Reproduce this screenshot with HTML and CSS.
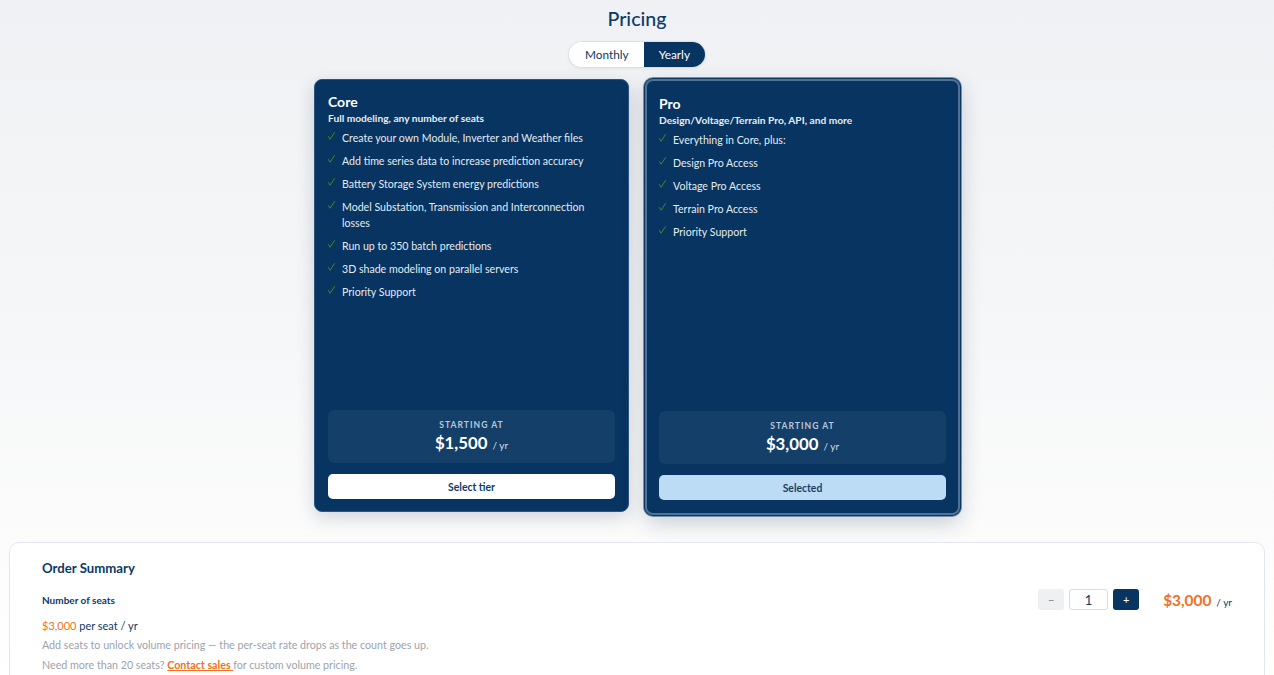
FILE: index.html
```html
<!DOCTYPE html>
<html lang="en">
<head>
<meta charset="utf-8">
<title>Pricing</title>
<link rel="stylesheet" href="styles.css">
</head>
<body>
<main class="page">
  <h1 class="title">Pricing</h1>
  <div class="toggle">
    <button class="toggle-btn">Monthly</button>
    <button class="toggle-btn active">Yearly</button>
  </div>

  <section class="plans">
    <article class="plan">
      <h2 class="plan-name">Core</h2>
      <p class="plan-sub">Full modeling, any number of seats</p>
      <ul class="features">
        <li><svg class="check" viewBox="0 0 8 9"><path d="M0.6 5.2 L2.4 8.2 L7.4 0.6"/></svg><span>Create your own Module, Inverter and Weather files</span></li>
        <li><svg class="check" viewBox="0 0 8 9"><path d="M0.6 5.2 L2.4 8.2 L7.4 0.6"/></svg><span>Add time series data to increase prediction accuracy</span></li>
        <li><svg class="check" viewBox="0 0 8 9"><path d="M0.6 5.2 L2.4 8.2 L7.4 0.6"/></svg><span>Battery Storage System energy predictions</span></li>
        <li><svg class="check" viewBox="0 0 8 9"><path d="M0.6 5.2 L2.4 8.2 L7.4 0.6"/></svg><span>Model Substation, Transmission and Interconnection losses</span></li>
        <li><svg class="check" viewBox="0 0 8 9"><path d="M0.6 5.2 L2.4 8.2 L7.4 0.6"/></svg><span>Run up to 350 batch predictions</span></li>
        <li><svg class="check" viewBox="0 0 8 9"><path d="M0.6 5.2 L2.4 8.2 L7.4 0.6"/></svg><span>3D shade modeling on parallel servers</span></li>
        <li><svg class="check" viewBox="0 0 8 9"><path d="M0.6 5.2 L2.4 8.2 L7.4 0.6"/></svg><span>Priority Support</span></li>
      </ul>
      <div class="price-box">
        <div class="price-label">STARTING AT</div>
        <div class="price"><span class="amount">$1,500</span><span class="per">/ yr</span></div>
      </div>
      <button class="plan-btn">Select tier</button>
    </article>

    <article class="plan selected">
      <h2 class="plan-name">Pro</h2>
      <p class="plan-sub">Design/Voltage/Terrain Pro, API, and more</p>
      <ul class="features">
        <li><svg class="check" viewBox="0 0 8 9"><path d="M0.6 5.2 L2.4 8.2 L7.4 0.6"/></svg><span>Everything in Core, plus:</span></li>
        <li><svg class="check" viewBox="0 0 8 9"><path d="M0.6 5.2 L2.4 8.2 L7.4 0.6"/></svg><span>Design Pro Access</span></li>
        <li><svg class="check" viewBox="0 0 8 9"><path d="M0.6 5.2 L2.4 8.2 L7.4 0.6"/></svg><span>Voltage Pro Access</span></li>
        <li><svg class="check" viewBox="0 0 8 9"><path d="M0.6 5.2 L2.4 8.2 L7.4 0.6"/></svg><span>Terrain Pro Access</span></li>
        <li><svg class="check" viewBox="0 0 8 9"><path d="M0.6 5.2 L2.4 8.2 L7.4 0.6"/></svg><span>Priority Support</span></li>
      </ul>
      <div class="price-box">
        <div class="price-label">STARTING AT</div>
        <div class="price"><span class="amount">$3,000</span><span class="per">/ yr</span></div>
      </div>
      <button class="plan-btn is-selected">Selected</button>
    </article>
  </section>

  <section class="summary">
    <h3 class="summary-title">Order Summary</h3>
    <div class="seats-row">
      <div class="seats-label">Number of seats</div>
      <div class="seats-controls">
        <button class="step minus">−</button>
        <input class="seat-input" type="text" value="1">
        <button class="step plus">+</button>
        <div class="total"><span class="total-amount">$3,000</span><span class="total-per">/ yr</span></div>
      </div>
    </div>
    <p class="per-seat"><span class="orange">$3,000</span> per seat / yr</p>
    <p class="note">Add seats to unlock volume pricing — the per-seat rate drops as the count goes up.</p>
    <p class="note">Need more than 20 seats? <a class="link" href="#">Contact sales </a>for custom volume pricing.</p>
  </section>
</main>
</body>
</html>
```

FILE: styles.css
```css
* { box-sizing: border-box; }
html, body { margin: 0; padding: 0; }
body {
  font-family: "Lato", "Open Sans", sans-serif;
  background: linear-gradient(180deg, #eff1f4 0%, #f6f7f8 50%, #fcfcfc 80%, #ffffff 100%);
  min-height: 675px;
  color: #0a3560;
}
.page {
  display: flex;
  flex-direction: column;
  align-items: center;
  padding: 6px 9px 0;
}
.title {
  margin: 0;
  font-size: 19.6px;
  font-weight: 500;
  color: #0b3a66;
  line-height: 26px;
}
.toggle {
  margin-top: 9px;
  display: flex;
  border: 1px solid #d9dee4;
  border-radius: 14px;
  overflow: hidden;
  background: #fff;
  box-shadow: 0 1px 3px rgba(0,0,0,0.06);
}
.toggle-btn {
  font-family: inherit;
  border: 0;
  background: #fff;
  color: #0b3a66;
  font-size: 11.8px;
  height: 25px;
  padding: 0 15px 0 16px;
  cursor: pointer;
}
.toggle-btn.active {
  background: #073460;
  color: #fff;
  padding: 0 15px;
}
.plans {
  margin-top: 11px;
  display: grid;
  grid-template-columns: 315px 315px;
  gap: 16px;
}
.plan {
  background: #073460;
  border: 1px solid #2c5580;
  border-radius: 8px;
  padding: 13px 13px 12px;
  display: flex;
  flex-direction: column;
  color: #fff;
  box-shadow: 0 6px 18px rgba(20,40,70,0.18);
  min-height: 433px;
}
.plan.selected {
  border: 2px solid #4f7397;
  box-shadow: 0 0 0 1px #0a3560, 0 0 0 2px #7592ae, 0 8px 22px rgba(20,40,70,0.22);
  padding: 14px 12px 13px;
  margin-bottom: -3px;
}
.plan-name {
  margin: 0;
  font-size: 14px;
  font-weight: 700;
  line-height: 18px;
}
.plan-sub {
  margin: 0;
  font-size: 10.2px;
  font-weight: 700;
  color: #e6edf4;
  line-height: 15px;
}
.features {
  list-style: none;
  margin: 4px 0 0;
  padding: 0 20px 0 0;
  display: flex;
  flex-direction: column;
  gap: 7px;
}
.features li {
  display: flex;
  gap: 7px;
  font-size: 10.6px;
  line-height: 16px;
  color: #e4ebf2;
}
.check {
  flex: none;
  width: 7px;
  height: 8px;
  margin-top: 2px;
  fill: none;
  stroke: #3f8f2b;
  stroke-width: 1.1;
  stroke-linecap: round;
  stroke-linejoin: round;
}
.price-box {
  margin-top: auto;
  background: #143f69;
  border-radius: 6px;
  height: 53px;
  padding-top: 9px;
  display: flex;
  flex-direction: column;
  align-items: center;
}
.price-label {
  font-size: 8.6px;
  font-weight: 700;
  letter-spacing: 1px;
  color: #b8c8d9;
  line-height: 12px;
}
.price {
  display: flex;
  align-items: baseline;
  gap: 5px;
  margin-top: 1px;
}
.amount {
  font-size: 16.8px;
  font-weight: 700;
  line-height: 22px;
}
.per {
  font-size: 10px;
  color: #d5dfea;
}
.plan-btn {
  margin-top: 11px;
  height: 25px;
  border: 0;
  border-radius: 5px;
  background: #fff;
  color: #0b3a66;
  font-family: inherit;
  font-size: 10.4px;
  font-weight: 700;
  cursor: pointer;
}
.plan-btn.is-selected {
  background: #bcdcf6;
  color: #1b3f63;
}
.summary {
  align-self: stretch;
  margin-top: 30px;
  background: #fff;
  border: 1px solid #e2e7ed;
  border-radius: 10px;
  padding: 16px 32px 20px 32px;
}
.summary-title {
  margin: 0;
  font-size: 13.2px;
  font-weight: 700;
  color: #0b3a66;
  line-height: 18px;
}
.seats-row {
  margin-top: 12px;
  display: flex;
  align-items: center;
  justify-content: space-between;
}
.seats-label {
  font-size: 10px;
  font-weight: 700;
  color: #0b3a66;
}
.seats-controls {
  display: flex;
  align-items: center;
  gap: 5px;
}
.step {
  width: 26px;
  height: 21px;
  border: 0;
  border-radius: 3px;
  font-family: inherit;
  font-size: 11px;
  padding: 0;
  cursor: pointer;
}
.minus { background: #eef0f2; color: #7d8791; }
.plus { background: #073460; color: #fff; }
.seat-input {
  width: 39px;
  height: 21px;
  border: 1px solid #d6dde5;
  border-radius: 3px;
  text-align: center;
  font-family: inherit;
  font-size: 13px;
  color: #0b3a66;
  padding: 0;
}
.total {
  margin-left: 19px;
  display: flex;
  align-items: baseline;
  gap: 5px;
}
.total-amount {
  font-size: 15.4px;
  font-weight: 700;
  color: #f37021;
}
.total-per {
  font-size: 10px;
  color: #0b3a66;
}
.per-seat {
  margin: 8px 0 0;
  font-size: 11px;
  line-height: 16px;
  color: #0b3a66;
}
.orange { color: #f37021; }
.note {
  margin: 2px 0 0;
  font-size: 10.7px;
  line-height: 17px;
  color: #9ba3ac;
}
.note + .note { margin-top: 3px; }
.link {
  color: #f37021;
  font-weight: 700;
  text-decoration: underline;
}
```
